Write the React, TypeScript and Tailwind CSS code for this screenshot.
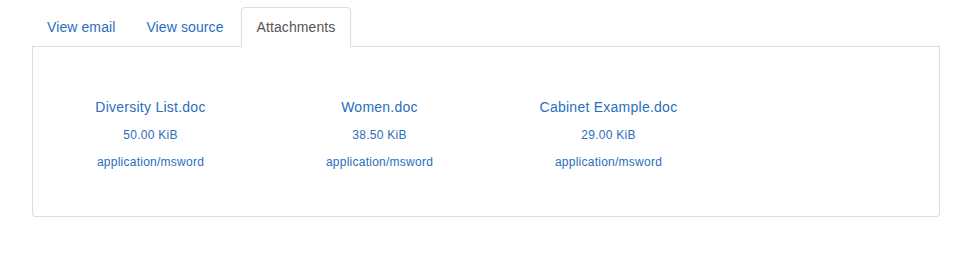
import React from "react";

const files = [
  { name: "Diversity List.doc", size: "50.00 KiB", type: "application/msword" },
  { name: "Women.doc", size: "38.50 KiB", type: "application/msword" },
  { name: "Cabinet Example.doc", size: "29.00 KiB", type: "application/msword" },
];

export default function App() {
  return (
    <div className="w-[967px] h-[266px] bg-white" style={{ fontFamily: '"Liberation Sans", Arial, sans-serif' }}>
      <div className="pt-[7px] pl-[32px] w-[940px]">
        <div className="flex border-b border-[#dddddd] h-[40px] tracking-[0.1px]">
          <a className="px-[15px] h-[40px] flex items-center text-[14px] text-[#2a6ebd] mr-[1px]">View email</a>
          <a className="px-[15px] h-[40px] flex items-center text-[14px] text-[#2a6ebd] mr-[2px]">View source</a>
          <a className="px-[15px] h-[41px] flex items-center text-[14px] text-[#555555] bg-white border border-[#dddddd] border-b-transparent rounded-t-[4px]">Attachments</a>
        </div>
        <div className="border border-t-0 border-[#dddddd] rounded-b-[4px] h-[170px] pt-[50px] pl-[3px] tracking-[0.25px]">
          <div className="flex">
            {files.map((f) => (
              <div key={f.name} className="w-[229px] flex flex-col items-center text-[#2a6ebd]">
                <div className="text-[14px] leading-[20px]">{f.name}</div>
                <div className="text-[12px] leading-[16px] mt-[10px]">{f.size}</div>
                <div className="text-[12px] leading-[16px] mt-[11px]">{f.type}</div>
              </div>
            ))}
          </div>
        </div>
      </div>
    </div>
  );
}
